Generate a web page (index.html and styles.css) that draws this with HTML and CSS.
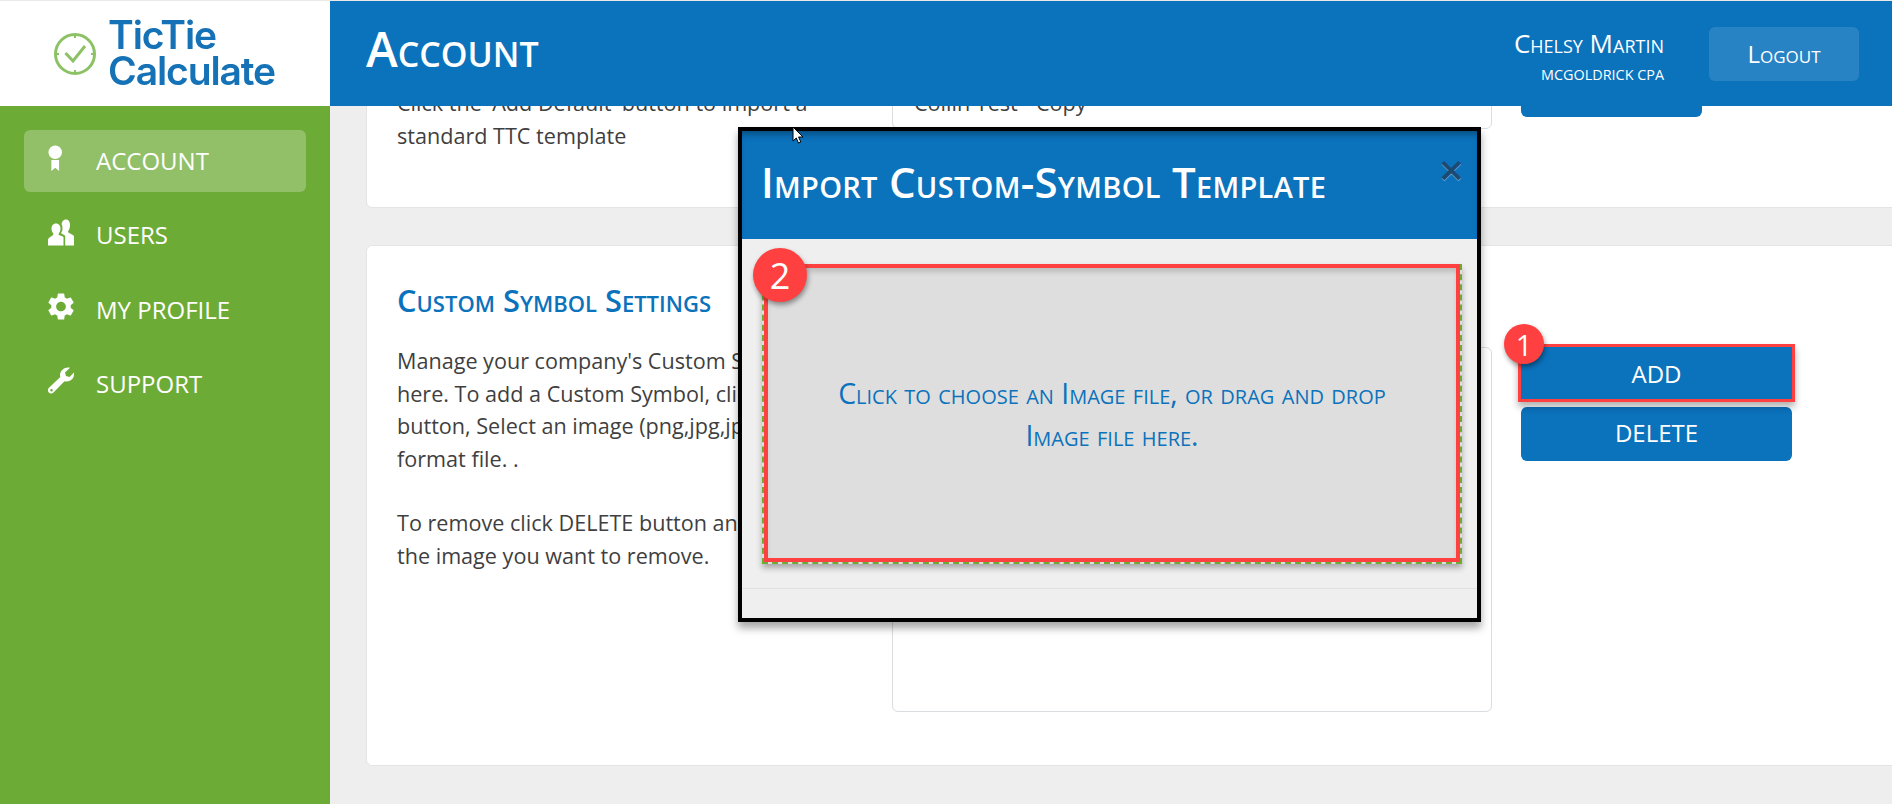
FILE: index.html
```html
<!DOCTYPE html>
<html lang="en">
<head>
<meta charset="utf-8">
<title>Account</title>
<link rel="stylesheet" href="styles.css">
</head>
<body>
<div class="app">
  <header class="topbar">
    <div class="logo">
      <svg class="logo-mark" viewBox="0 0 44 44" width="44" height="44" aria-hidden="true">
        <circle cx="22" cy="22" r="19.5" fill="none" stroke="#8cc265" stroke-width="3"/>
        <path d="M22 2v4M22 38v4M2 22h4M38 22h4" stroke="#8cc265" stroke-width="2"/>
        <path d="M12.5 21l7.5 8 12-15" fill="none" stroke="#8cc265" stroke-width="3"/>
      </svg>
      <div class="logo-text"><span>TicTie</span><span>Calculate</span></div>
    </div>
    <div class="titlebar">
      <h1 class="page-title">Account</h1>
      <div class="user">
        <div class="user-name">Chelsy Martin</div>
        <div class="user-org">MCGOLDRICK CPA</div>
      </div>
      <button class="logout">Logout</button>
    </div>
  </header>
  <div class="body">
    <nav class="sidebar">
      <a class="nav-item nav-upper active">
        <svg class="nav-icon" viewBox="0 0 26 28" aria-hidden="true"><circle cx="7" cy="7.500" r="7" fill="#fff"/><path d="M3 15.500h8V27l-4-3.500L3 27z" fill="#fff"/></svg>
        <span>ACCOUNT</span>
      </a>
      <a class="nav-item nav-upper">
        <svg class="nav-icon" viewBox="0 0 26 26" aria-hidden="true"><path d="M8 4c3 0 4.500 2.500 4.500 5s-1 4-2 5.500c0 1.500 3 1.500 5 3V26H0v-5.500c0-3 5-3.500 5.500-6C4.500 13 3.500 11.500 3.500 9 3.500 6.500 5 4 8 4z" fill="#fff"/><path d="M18 0c2.800 0 4 2.500 4 5.500 0 3-1 5-2 6.500 0 1 1 1.500 3 2.500 2 1 3 1.500 3 3V26h-8.800v-9.500c-1-1.500-3-2-4.200-2.800 1.300-2 1.500-3.200 1.500-5.200 0-1.500-.3-2.800-1-4C14 2 15.500 0 18 0z" fill="#fff"/></svg>
        <span>USERS</span>
      </a>
      <a class="nav-item">
        <svg class="nav-icon" viewBox="2.500 2 19 20" aria-hidden="true"><path fill="#fff" fill-rule="evenodd" d="M19.140 12.940c.04-.3.060-.61.060-.94 0-.32-.020-.64-.07-.94l2.030-1.580a.49.490 0 0 0 .12-.61l-1.920-3.320a.488.488 0 0 0-.59-.22l-2.390.960c-.5-.38-1.030-.7-1.620-.94l-.36-2.540a.484.484 0 0 0-.48-.41h-3.840c-.24 0-.43.170-.47.410l-.36 2.540c-.59.240-1.130.570-1.620.940l-2.390-.960c-.22-.080-.47 0-.59.220L2.740 8.870c-.12.210-.080.470.12.610l2.030 1.580c-.05.300-.09.630-.09.940s.020.640.070.940l-2.030 1.580a.49.490 0 0 0-.12.610l1.920 3.320c.12.220.37.290.59.220l2.390-.960c.5.380 1.030.7 1.620.940l.36 2.540c.05.240.24.410.48.410h3.840c.24 0 .44-.170.47-.41l.36-2.540c.59-.240 1.130-.560 1.620-.940l2.390.960c.22.080.47 0 .59-.220l1.920-3.320c.12-.220.070-.470-.12-.610l-2.010-1.580zM12 15.600c-1.980 0-3.600-1.620-3.600-3.600s1.620-3.600 3.600-3.600 3.600 1.620 3.600 3.600-1.620 3.600-3.600 3.600z"/></svg>
        <span>MY PROFILE</span>
      </a>
      <a class="nav-item">
        <svg class="nav-icon" viewBox="0 0 26 26" aria-hidden="true"><path fill="#fff" fill-rule="evenodd" d="M20 0c.8 0 1.500.1 2 .3L17 5l1 3.500 3.500 1L26 5c.1.600 0 1.300 0 2 0 4-3.500 7-7.500 7-.7 0-1.400-.1-2-.3L5.500 25c-1.500 1.500-3.500 1.300-4.700 0-1.200-1.300-1.200-3.300.2-4.700L12.300 9.500c-.2-.6-.3-1.300-.3-2C12 3.500 16 0 20 0zM3.500 21.500a1.300 1.300 0 1 0 0 2.600 1.300 1.300 0 0 0 0-2.600z"/></svg>
        <span>SUPPORT</span>
      </a>
    </nav>
    <main class="content">
      <section class="card card-top">
        <div class="card-text">
          <p class="para">Click the 'Add Default' button to import a<br>standard TTC template</p>
        </div>
        <div class="list list-top"><div class="list-row">Collin Test - Copy</div></div>
        <div class="actions"><button class="btn btn-top"></button></div>
      </section>
      <section class="card card-symbols">
        <div class="card-text">
          <h2 class="card-title">Custom Symbol Settings</h2>
          <p class="para">Manage your company's Custom Symbols<br>here. To add a Custom Symbol, click ADD<br>button, Select an image (png,jpg,jpeg)<br>format file. .</p>
          <p class="para para-gap">To remove click DELETE button and select<br>the image you want to remove.</p>
        </div>
        <div class="list list-symbols"></div>
        <div class="actions actions-symbols">
          <div class="btn-wrap">
            <button class="btn btn-marked">ADD</button>
            <span class="badge badge-one">1</span>
          </div>
          <button class="btn btn-delete">DELETE</button>
        </div>
      </section>
    </main>
  </div>

  <div class="modal">
    <div class="modal-head">
      <h3 class="modal-title">Import Custom-Symbol Template</h3>
      <span class="modal-close">×</span>
    </div>
    <div class="modal-body">
      <div class="dropzone">
        <span class="badge badge-two">2</span>
        <p class="drop-text">Click to choose an Image file, or drag and drop<br>Image file here.</p>
      </div>
    </div>
    <div class="modal-foot"></div>
  </div>

  <svg class="cursor" viewBox="0 0 12 20" width="12" height="20" aria-hidden="true"><path d="M1 1v14l3.300-3 2.200 5 2.300-1-2.200-5H11z" fill="#fff" stroke="#000" stroke-width="1"/></svg>
</div>
</body>
</html>
```
FILE: styles.css
```css
* { box-sizing: border-box; }
html, body { margin: 0; height: 100%; overflow: hidden; }
body { font-family: "Open Sans", "Noto Sans", sans-serif; color: #3a3a3a; background: #eeeeee; }
.app { position: relative; width: 1892px; height: 804px; display: flex; flex-direction: column; overflow: hidden; padding-top: 1px; background: #e9e9e9; }

.topbar { display: flex; height: 105px; flex: none; position: relative; z-index: 2; }
.logo { width: 330px; flex: none; background: #fff; display: flex; align-items: center; padding-left: 53px; gap: 11px; }
.logo-mark { flex: none; }
.logo-text { display: flex; flex-direction: column; font-family: "Inter", "Roboto", sans-serif; font-weight: 600; font-size: 39px; line-height: 36px; letter-spacing: -1.100px; color: #1672b6; filter: blur(.5px); padding-bottom: 1px; }
.titlebar { flex: 1; background: #0b72bc; display: flex; align-items: center; padding-left: 36px; padding-right: 33px; color: #fff; }
.page-title { margin: 0; flex: 1; font-size: 48px; font-weight: 600; font-variant: small-caps; line-height: 1; padding-bottom: 10px; }
.user { text-align: right; margin-right: 45px; }
.user-name { font-size: 26px; font-variant: small-caps; line-height: 34px; margin-top: 5px; }
.user-org { font-size: 14.400px; font-weight: 500; line-height: 24px; margin-top: 3px; }
.logout { width: 150px; height: 54px; border: 0; border-radius: 6px; background: rgba(255, 255, 255, .12); color: #fff; font: 400 24px "Open Sans", sans-serif; font-variant: small-caps; }

.body { flex: 1; display: flex; min-height: 0; }
.sidebar { width: 330px; flex: none; background: #6dab37; padding: 24px; display: flex; flex-direction: column; gap: 12px; }
.nav-item { height: 62px; border-radius: 6px; padding-left: 24px; display: flex; align-items: center; color: #fff; font-size: 24px; }
.nav-upper span { margin-bottom: 2px; }
.nav-item.active { background: rgba(255, 255, 255, .25); }
.nav-icon { width: 26px; height: 27px; margin-right: 22px; margin-bottom: 6px; flex: none; }

.content { flex: 1; overflow: hidden; padding-left: 36px; display: flex; flex-direction: column; gap: 37px; background: #eeeeee; }
.card { flex: none; width: 1600px; background: #fff; border: 1px solid #e4e4e4; border-radius: 6px; padding-left: 30px; display: grid; grid-template-columns: 495px 600px 300px; align-items: start; }
.card-top { height: 202px; margin-top: -100px; padding-top: 80px; }
.card-symbols { height: 521px; padding-top: 32px; }
.card-title { margin: 0 0 23px; font-size: 30.800px; font-weight: 600; font-variant: small-caps; line-height: 44px; color: #0b72bc; }
.para { margin: 0; font-size: 21.600px; line-height: 32.500px; color: #3f3f3f; }
.para-gap { margin-top: 32px; }

.list { background: #fff; border: 1px solid #d9dde0; border-radius: 6px; }
.list-top { height: 41px; margin-top: 1px; padding-left: 21px; font-size: 21.600px; line-height: 28px; color: #3f3f3f; }
.list-symbols { height: 365px; margin-top: 69px; }
.actions { display: flex; flex-direction: column; gap: 8px; padding-left: 29px; }
.actions-symbols { margin-top: 69px; }
.btn { display: block; width: 271px; height: 54px; border: 0; border-radius: 6px; background: #0b72bc; color: #fff; font: 400 24px "Open Sans", sans-serif; }
.btn-top { width: 181px; height: 30px; }
.btn-delete { padding-bottom: 4px; }
.btn-wrap { position: relative; }
.btn-marked { border-radius: 0; height: 52px; box-shadow: 0 0 0 3px #ff4040, 0 5px 7px 3px rgba(0, 0, 0, .3); }
.badge { position: absolute; display: flex; align-items: center; justify-content: center; border-radius: 50%; background: #ff4040; color: #fff; box-shadow: 1px 3px 5px rgba(0, 0, 0, .4); font-family: "Open Sans", sans-serif; }
.badge-one { width: 40px; height: 40px; left: -17px; top: -23px; font-size: 29px; }
.badge-two { width: 54px; height: 54px; left: -11px; top: -16px; font-size: 36px; }

.modal { position: absolute; left: 738px; top: 127px; width: 743px; height: 495px; border: 4px solid #000; display: flex; flex-direction: column; background: #efefef; box-shadow: 0 6px 8px rgba(0, 0, 0, .35); z-index: 5; }
.modal-head { height: 108px; flex: none; background: #0b72bc; box-shadow: inset 0 7px 7px -4px rgba(0, 0, 0, .35); position: relative; padding-left: 19px; display: flex; align-items: center; }
.modal-title { margin: 0; color: #fff; font-size: 42px; letter-spacing: .28px; font-weight: 600; font-variant: small-caps; line-height: 1; padding-bottom: 6px; }
.modal-close { position: absolute; right: 13px; top: 13px; font-size: 44px; font-weight: 600; line-height: 50px; color: #1d4a73; text-shadow: 0 1px 0 #6fa6cf; }
.modal-body { flex: 1; padding: 25px 15px 24px 20px; }
.dropzone { position: relative; height: 100%; border: 2px dashed #6dab37; border-top: 0; background: #dedede; box-shadow: inset 0 0 0 4px #ff4040, inset 0 5px 5px 3px rgba(0, 0, 0, .15), 0 4px 6px rgba(0, 0, 0, .3); display: flex; align-items: center; justify-content: center; }
.drop-text { margin: 0; text-align: center; color: #0b72bc; font-size: 28.400px; font-variant: small-caps; line-height: 42px; padding-top: 1px; }
.modal-foot { height: 30px; flex: none; border-top: 1px solid #dfe1e4; }
.cursor { position: absolute; left: 792px; top: 126px; z-index: 6; }
```
